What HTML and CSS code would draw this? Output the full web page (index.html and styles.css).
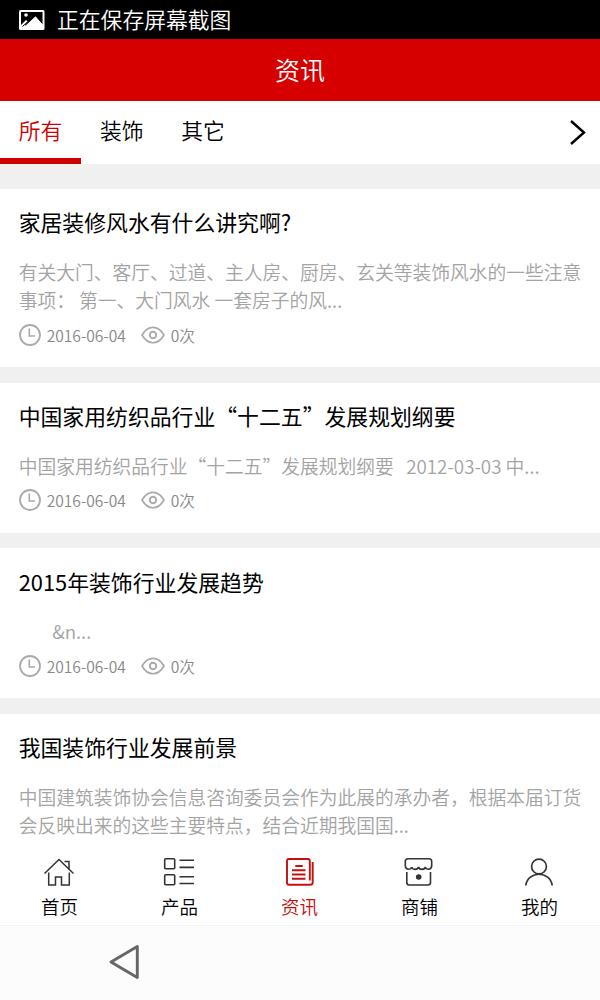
FILE: index.html
```html
<!DOCTYPE html>
<html lang="zh-CN">
<head>
<meta charset="utf-8">
<title>资讯</title>
<link rel="stylesheet" href="styles.css">
</head>
<body>
<div class="screen">
  <div class="status">
    <svg class="status-icon" width="26" height="20" viewBox="0 0 26 20"><rect width="25.5" height="20" rx="1.5" fill="#fff"/><path d="M2 2H23.5V14.5L16.500 6.500L7 16L4.500 14L2 16Z" fill="#000"/><path d="M5 17L16.500 6.500L23.500 14.500V17Z" fill="#fff"/><circle cx="7" cy="5" r="1.800" fill="#fff"/><path d="M1.500 15.500L7 10L9 11.500L4 17H1.500Z" fill="#fff"/><path d="M3.500 16.500L9.500 11" stroke="#000" stroke-width="1"/></svg>
    <span>正在保存屏幕截图</span>
  </div>
  <header class="header">资讯</header>
  <nav class="tabs">
    <a class="tab tab-active">所有</a>
    <a class="tab">装饰</a>
    <a class="tab">其它</a>
    <svg class="tabs-more" width="18" height="28" viewBox="0 0 18 28"><path d="M2 3L15 14.500L2 26" fill="none" stroke="#000" stroke-width="2.400"/></svg>
  </nav>
  <main class="list">
    <article class="item">
      <h2 class="item-title">家居装修风水有什么讲究啊?</h2>
      <p class="item-desc">有关大门、客厅、过道、主人房、厨房、玄关等装饰风水的一些注意<br>事项： 第一、大门风水 一套房子的风...</p>
      <div class="meta">
        <svg class="clock" width="22" height="22" viewBox="0 0 22 22"><use href="#clock"/></svg><span class="date">2016-06-04</span>
        <svg class="eye" width="24" height="18" viewBox="0 0 24 18"><use href="#eye"/></svg><span>0次</span>
      </div>
    </article>
    <article class="item">
      <h2 class="item-title">中国家用纺织品行业“十二五”发展规划纲要</h2>
      <p class="item-desc">中国家用纺织品行业“十二五”发展规划纲要&nbsp;&nbsp; 2012-03-03 中...</p>
      <div class="meta">
        <svg class="clock" width="22" height="22" viewBox="0 0 22 22"><use href="#clock"/></svg><span class="date">2016-06-04</span>
        <svg class="eye" width="24" height="18" viewBox="0 0 24 18"><use href="#eye"/></svg><span>0次</span>
      </div>
    </article>
    <article class="item">
      <h2 class="item-title">2015年装饰行业发展趋势</h2>
      <p class="item-desc">&nbsp;&nbsp;&nbsp;&nbsp;&nbsp;&nbsp;&nbsp;&nbsp;&amp;n...</p>
      <div class="meta">
        <svg class="clock" width="22" height="22" viewBox="0 0 22 22"><use href="#clock"/></svg><span class="date">2016-06-04</span>
        <svg class="eye" width="24" height="18" viewBox="0 0 24 18"><use href="#eye"/></svg><span>0次</span>
      </div>
    </article>
    <article class="item">
      <h2 class="item-title">我国装饰行业发展前景</h2>
      <p class="item-desc">中国建筑装饰协会信息咨询委员会作为此展的承办者，根据本届订货<br>会反映出来的这些主要特点，结合近期我国国...</p>
    </article>
  </main>
  <nav class="dock">
    <a class="dock-item">
      <svg class="dock-icon" width="32" height="30" viewBox="0 0 32 30"><path d="M1.500 16.500L16 2.500L30.500 16.500M21.500 4.500H26V12M5.700 15.500V28H12.500V20H18.500V28H26.300V15.500" fill="none" stroke="#333" stroke-width="1.500"/></svg>
      <span>首页</span>
    </a>
    <a class="dock-item">
      <svg class="dock-icon" width="32" height="30" viewBox="0 0 32 30"><g fill="none" stroke="#333" stroke-width="1.600"><rect x="1.700" y="1.700" width="10" height="10" rx="1"/><rect x="1.700" y="17.800" width="10" height="10" rx="1"/><path d="M16.500 3.200H31M16.500 10.400H31M16.500 19.800H31M16.500 26.500H31"/></g></svg>
      <span>产品</span>
    </a>
    <a class="dock-item dock-active">
      <svg class="dock-icon" width="32" height="30" viewBox="0 0 32 30"><g fill="none" stroke="#c4100f"><path d="M25.800 23.500V4Q25.800 2 23.800 2H5Q3 2 3 4V25.500Q3 27.800 5 27.800H26Q28.700 27.800 28.700 25.500V5" stroke-width="1.900"/><path d="M11.300 9H18.700M8 13.200H21.500M8 17.500H21.500M8 21.800H21.500" stroke-width="1.900"/></g></svg>
      <span>资讯</span>
    </a>
    <a class="dock-item">
      <svg class="dock-icon" width="32" height="30" viewBox="0 0 32 30"><g fill="none" stroke="#333" stroke-width="1.600"><path d="M5 12.300Q2.300 11.500 2.300 8.500V4.500Q2.300 1.800 5 1.800H26Q28.700 1.800 28.700 4.500V8.500Q28.700 11.500 26 12.300M5 12.300C8 12.300 8.500 11.500 8.700 10C9 13.100 14.800 13.100 15.500 10C16.200 13.100 21.800 13.100 22.300 10C22.500 11.500 23 12.300 26 12.300"/><path d="M3.800 15V25.500Q3.800 28 6.300 28H25Q27.500 28 27.500 25.500V15"/></g><circle cx="15.700" cy="20" r="2.800" fill="#333"/></svg>
      <span>商铺</span>
    </a>
    <a class="dock-item">
      <svg class="dock-icon" width="32" height="30" viewBox="0 0 32 30"><g fill="none" stroke="#333" stroke-width="1.700"><circle cx="16" cy="9.500" r="7.400"/><path d="M2.800 28.500C4.500 13.500 27.500 13.500 29.200 28.500"/></g></svg>
      <span>我的</span>
    </a>
  </nav>
  <footer class="system">
    <svg width="32" height="36" viewBox="0 0 32 36"><path d="M2 18L28.300 2.500V33.500Z" fill="none" stroke="#666" stroke-width="2.900" stroke-linejoin="round"/></svg>
  </footer>
</div>
<svg class="defs" width="0" height="0">
  <symbol id="clock" viewBox="0 0 22 22"><circle cx="11" cy="11" r="10" fill="none" stroke="#aaa" stroke-width="1.800"/><path d="M10.300 4.500V12H16" fill="none" stroke="#aaa" stroke-width="1.600"/></symbol>
  <symbol id="eye" viewBox="0 0 24 18"><path d="M1 9C7-1.300 17-1.300 23 9C17 19.300 7 19.300 1 9Z" fill="none" stroke="#aaa" stroke-width="1.700"/><circle cx="12" cy="9" r="3.200" fill="none" stroke="#aaa" stroke-width="1.900"/></symbol>
</svg>
</body>
</html>
```
FILE: styles.css
```css
* { box-sizing: border-box; }
body {
  margin: 0;
  font-family: "Noto Sans CJK SC", "Liberation Sans", sans-serif;
  font-weight: 350;
  color: #000;
  background: #fff;
}
.screen {
  width: 600px;
  height: 1000px;
  display: flex;
  flex-direction: column;
  overflow: hidden;
}
.status {
  flex: none;
  height: 39px;
  padding-left: 19px;
  display: flex;
  align-items: center;
  gap: 12px;
  background: #000;
  color: #fff;
  font-size: 21.8px;
  line-height: 37px;
}
.status span { margin-bottom: 2px; }
.header {
  flex: none;
  height: 62px;
  background: #d70000;
  color: #fff;
  font-size: 25px;
  line-height: 60px;
  text-align: center;
}
.tabs {
  flex: none;
  height: 63px;
  display: flex;
  align-items: stretch;
  font-size: 21.8px;
  line-height: 58px;
}
.tab { width: 81.3px; padding-left: 18.7px; }
.tab-active { color: #ce0000; border-bottom: 6px solid #ce0000; }
.tabs-more { margin: 17px 13px 0 auto; }
.list {
  flex: none;
  height: 682px;
  padding-top: 25px;
  display: flex;
  flex-direction: column;
  gap: 15.6px;
  background: #f0f0f0;
  overflow: hidden;
}
.item {
  flex: none;
  padding: 11.3px 18.7px 12.4px;
  background: #fff;
}
.item:last-child { padding-bottom: 30px; }
.item-title {
  margin: 0 0 13.7px;
  font-size: 21.85px;
  font-weight: 400;
  line-height: 44px;
  white-space: nowrap;
}
.item-desc {
  margin: 0 0 0.5px;
  color: #a3a3a3;
  font-size: 18.75px;
  line-height: 28.1px;
  white-space: nowrap;
}
.meta {
  height: 40px;
  display: flex;
  align-items: center;
  color: #888;
  font-size: 15.6px;
  white-space: nowrap;
}
.date { width: 80px; margin: 0 14px 0 6px; }
.eye { margin-right: 6px; }
.dock {
  flex: none;
  height: 80px;
  display: grid;
  grid-template-columns: repeat(5, 120px);
  margin-left: -0.6px;
  border-bottom: 1px solid #f2f2f2;
  background: #fff;
}
.dock-item {
  padding-top: 11.4px;
  display: flex;
  flex-direction: column;
  align-items: center;
  gap: 5px;
  font-size: 18.5px;
  line-height: 28px;
}
.dock-active { color: #c4100f; }
.dock-active .dock-icon { margin-left: 1px; }
.system {
  flex: 1;
  padding: 18px 0 0 109px;
  background: #fcfcfc;
}
.defs { position: absolute; }
```
